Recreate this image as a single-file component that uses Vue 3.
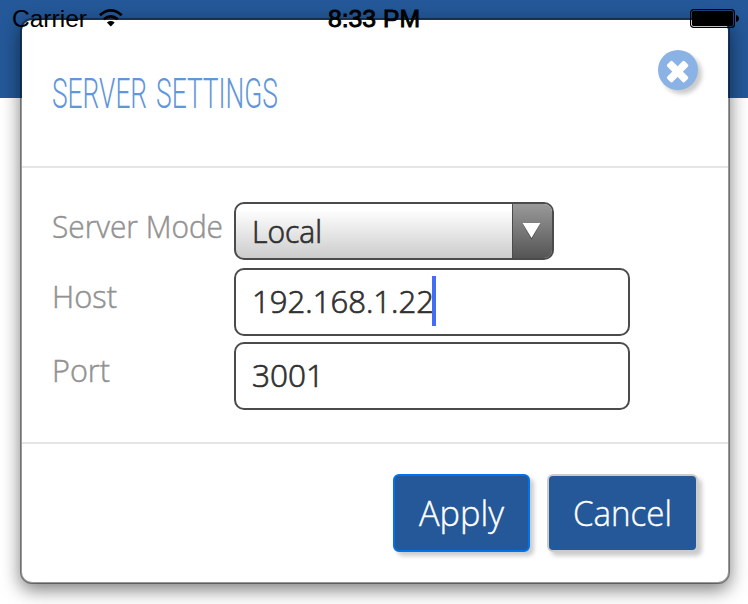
<script setup>
import { ref } from 'vue'

const mode = ref('Local')
const host = ref('192.168.1.22')
const port = ref('3001')
</script>

<template>
  <div class="screen">
    <div class="status">
      <div class="carrier">
        <svg class="label" width="75" height="28"><text x="-1" y="27" textLength="75" lengthAdjust="spacingAndGlyphs">Carrier</text></svg>
        <svg class="wifi" width="24" height="18" viewBox="0 0 24 18">
          <path d="M.9 6.2Q11.8-3.4 22.7 6.2" fill="none" stroke="#000" stroke-width="2.8" />
          <path d="M4.9 10.3Q11.8 4.4 18.7 10.3" fill="none" stroke="#000" stroke-width="2.8" />
          <path d="M7.9 13.4Q11.8 10.8 15.7 13.4L11.8 17.6Z" />
        </svg>
      </div>
      <svg class="label clock" width="92" height="28"><text x="0" y="27" textLength="92" lengthAdjust="spacingAndGlyphs">8:33 PM</text></svg>
      <svg class="battery" width="50" height="20" viewBox="0 0 50 20">
        <rect x=".6" y=".6" width="43.8" height="17.8" rx="3" fill="none" stroke="#000" stroke-width="1.2" />
        <rect x="2" y="2" width="41" height="15" rx="1.5" />
        <path d="M46 6Q49 7 49 9.5T46 13Z" />
      </svg>
    </div>

    <section class="modal">
      <div class="head">
        <h1 class="title">
          <svg width="226" height="50"><text x="0" y="40" textLength="226" lengthAdjust="spacingAndGlyphs">SERVER SETTINGS</text></svg>
        </h1>
        <button class="close" aria-label="Close">
          <svg width="40" height="40" viewBox="0 0 40 40">
            <g transform="translate(19.6 21.6) rotate(45)" fill="#fff">
              <rect x="-12.4" y="-3.8" width="24.8" height="7.6" rx="1.8" />
              <rect x="-3.8" y="-12.4" width="7.6" height="24.8" rx="1.8" />
            </g>
          </svg>
        </button>
      </div>

      <div class="body">
        <div class="row">
          <svg class="name" width="182" height="50"><text x="0" y="36" textLength="171" lengthAdjust="spacingAndGlyphs">Server Mode</text></svg>
          <div class="select">
            <svg class="value" width="70" height="54"><text x="0" y="39" textLength="70" lengthAdjust="spacingAndGlyphs">{{ mode }}</text></svg>
            <span class="arrow">
              <svg width="40" height="54" viewBox="0 0 40 54">
                <path d="M9.5 19.5H27.5L18.5 35.5Z" fill="#444" />
                <path d="M9.5 19H27.5L18.5 34Z" fill="#fff" />
              </svg>
            </span>
          </div>
        </div>
        <div class="row tall">
          <svg class="name" width="182" height="50"><text x="0" y="40" textLength="65" lengthAdjust="spacingAndGlyphs">Host</text></svg>
          <div class="field">
            <svg class="value" width="180" height="64"><text x="0" y="43" textLength="182" lengthAdjust="spacingAndGlyphs">{{ host }}</text></svg>
            <span class="caret"></span>
          </div>
        </div>
        <div class="row tall">
          <svg class="name" width="182" height="50"><text x="0" y="40" textLength="58" lengthAdjust="spacingAndGlyphs">Port</text></svg>
          <div class="field">
            <svg class="value" width="180" height="64"><text x="0" y="43" textLength="72" lengthAdjust="spacingAndGlyphs">{{ port }}</text></svg>
          </div>
        </div>
      </div>

      <div class="foot">
        <button class="btn apply"><svg width="85" height="74"><text x="0" y="50" textLength="85" lengthAdjust="spacingAndGlyphs">Apply</text></svg></button>
        <button class="btn cancel"><svg width="98" height="74"><text x="-1" y="50" textLength="99" lengthAdjust="spacingAndGlyphs">Cancel</text></svg></button>
      </div>
    </section>
  </div>
</template>

<style>
body {
  margin: 0;
  background: #fff;
}
</style>

<style scoped>
* {
  box-sizing: border-box;
}
svg {
  display: block;
  overflow: visible;
  flex: none;
}
button {
  border: 0;
  padding: 0;
}
.screen {
  position: relative;
  width: 748px;
  height: 604px;
  overflow: hidden;
  background: linear-gradient(#245898 98px, #fff 98px);
  padding: 18px 18px 0 20px;
}
.status {
  position: absolute;
  z-index: 2;
  inset: 0 0 auto 0;
  height: 36px;
  display: grid;
  grid-template-columns: 315px 1fr 50px;
  padding: 0 8px 0 13px;
}
.carrier {
  display: flex;
  gap: 11px;
}
.label text {
  font: 24px "Liberation Sans", sans-serif;
}
.clock text {
  stroke: #000;
  stroke-width: 0.9px;
}
.wifi {
  margin-top: 9px;
}
.battery {
  margin-top: 9px;
}
.modal {
  width: 710px;
  height: 566px;
  border: 2px solid rgba(0, 0, 0, 0.4);
  border-radius: 12px;
  background: #fff;
  background-clip: padding-box;
  box-shadow: 0 6px 18px rgba(0, 0, 0, 0.5);
}
.head {
  height: 148px;
  display: flex;
  justify-content: space-between;
  padding: 30px 30px 0;
  border-bottom: 2px solid #e5e5e5;
}
.title {
  margin: 18px 0 0;
}
.title text {
  font: 300 42px Roboto, sans-serif;
  word-spacing: 4px;
  fill: #6196da;
}
.close {
  width: 40px;
  height: 40px;
  border-radius: 50%;
  background: #8bb2e4;
  box-shadow: 4px 4px 4px #ccc;
}
.body {
  height: 276px;
  padding: 34px 30px 0;
  border-bottom: 2px solid #e5e5e5;
}
.row {
  display: flex;
  height: 66px;
}
.tall {
  height: 74px;
}
.name text {
  font: 300 31px "Open Sans", sans-serif;
  fill: #929292;
  stroke: #929292;
  stroke-width: 0.5px;
}
.value text {
  font: 300 31px "Open Sans", sans-serif;
  fill: #303030;
  stroke: #303030;
  stroke-width: 0.7px;
}
.select {
  display: flex;
  justify-content: space-between;
  width: 320px;
  height: 58px;
  padding-left: 16px;
  border: 2px solid #4b4b4b;
  border-radius: 10px;
  background: linear-gradient(#fff 10%, #ccc);
  overflow: hidden;
}
.arrow {
  width: 40px;
  border-left: 1px solid #4b4b4b;
  background: linear-gradient(#999, #555);
}
.field {
  display: flex;
  width: 396px;
  height: 68px;
  padding-left: 16px;
  border: 2px solid #4b4b4b;
  border-radius: 10px;
  background: #fff;
}
.caret {
  position: relative;
  width: 4px;
  height: 50px;
  margin-top: 6px;
  background: #456df2;
}
.foot {
  display: flex;
  justify-content: flex-end;
  gap: 17px;
  padding: 30px 30px 0;
}
.btn {
  display: flex;
  justify-content: center;
  height: 78px;
  border: 2px solid #0072ec;
  border-radius: 6px;
  background: #245898;
  box-shadow: 4px 4px 4px #ccc;
}
.btn text {
  font: 300 35px "Open Sans", sans-serif;
  fill: #fff;
  stroke: #fff;
  stroke-width: 0.4px;
}
.apply {
  width: 137px;
}
.cancel {
  width: 151px;
  border-color: #ccc;
}
</style>
